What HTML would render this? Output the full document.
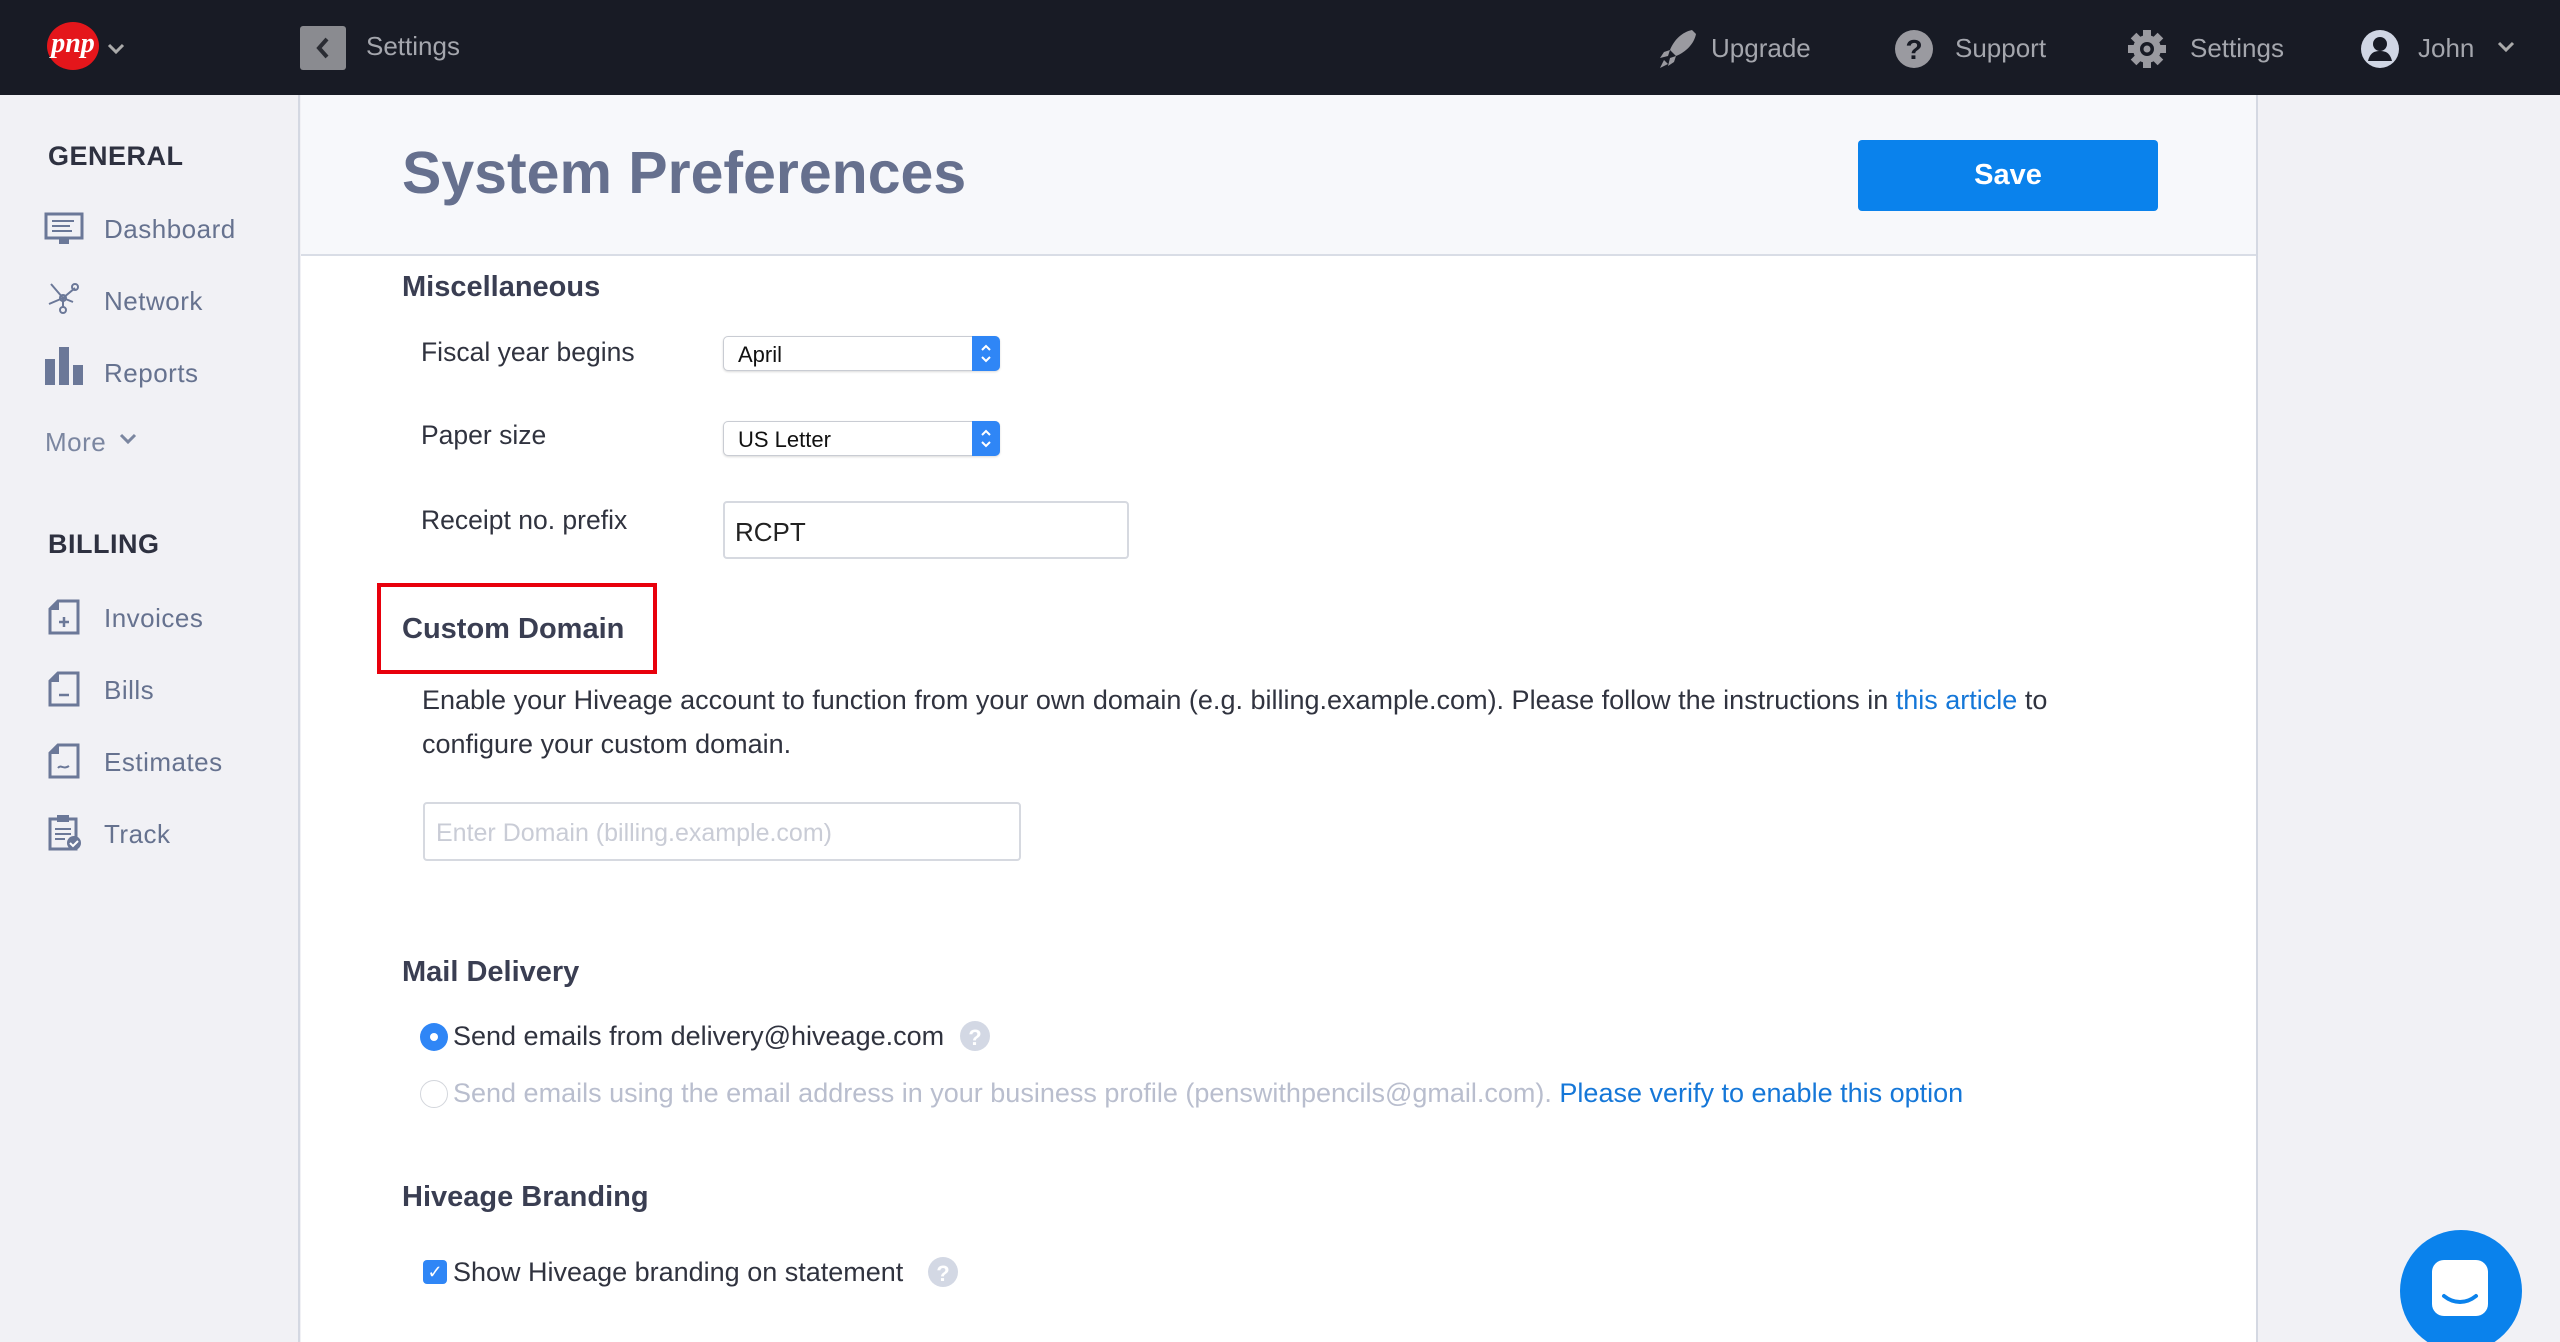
<!DOCTYPE html>
<html><head><meta charset="utf-8"><style>
*{margin:0;padding:0;box-sizing:border-box}
html,body{width:2560px;height:1342px;overflow:hidden}
body{background:#f1f1f5;font-family:"Liberation Sans",sans-serif;position:relative}
.a{position:absolute;white-space:nowrap}
.top{position:absolute;left:0;top:0;width:2560px;height:95px;background:#181b25}
.side{position:absolute;left:0;top:95px;width:300px;height:1247px;background:#f1f1f5;border-right:2px solid #d4d8e2}
.main{position:absolute;left:301px;top:95px;width:1957px;height:1247px;background:#fff;border-right:2px solid #d4d8e2;overflow:hidden}
.hdr{position:absolute;left:0;top:0;width:100%;height:161px;background:#f7f8fb;border-bottom:2px solid #d9dde6}
.nav{font-size:26px;color:#66728f;letter-spacing:.5px}
.sh{font-size:27px;color:#2e3140;font-weight:bold;letter-spacing:.5px}
.h2{font-size:29px;color:#3a3e52;font-weight:bold}
.lbl{font-size:26.5px;color:#30333f}
.tb{font-size:26px;color:#a4a6ad}
.sel{position:absolute;height:35px;border:1px solid #c9ccd3;border-radius:5px;background:#fff;box-shadow:0 1px 2px rgba(0,0,0,.15);font-size:22px;color:#111;padding:5px 0 0 14px}
.sel i{position:absolute;right:-1px;top:-1px;width:28px;height:35px;background:#2f86f6;border-radius:0 5px 5px 0}
</style></head><body>
<div class="top">
  <div class="a" style="left:47px;top:22px;width:52px;height:48px;border-radius:50%;background:#e4161b;color:#fff;font:italic bold 28px 'Liberation Serif',serif;text-align:center;line-height:44px">pnp</div>
  <svg class="a" style="left:106px;top:42px" width="20" height="14"><path d="M3 3l7 7 7-7" stroke="#aaa" stroke-width="3" fill="none"/></svg>
  <div class="a" style="left:300px;top:26px;width:46px;height:44px;background:#8a8b90;border-radius:3px"></div>
  <svg class="a" style="left:312px;top:36px" width="22" height="24"><path d="M15 3l-8 9 8 9" stroke="#2a2c33" stroke-width="4" fill="none"/></svg>
  <div class="a tb" style="left:366px;top:31px">Settings</div>
  <svg class="a" style="left:1656px;top:28px" width="40" height="42"><path d="M36 2c-10 2-18 10-22 20l6 6c10-4 18-12 20-22zM14 22l-6 2-4 6 8-2M20 28l-2 6-6 4 2-8M8 32l-4 8 8-4" fill="#9a9aa0"/></svg>
  <div class="a tb" style="left:1711px;top:33px">Upgrade</div>
  <svg class="a" style="left:1894px;top:29px" width="40" height="40"><circle cx="20" cy="20" r="19" fill="#9a9aa0"/><text x="20" y="30" font-size="28" font-weight="bold" text-anchor="middle" fill="#181b25" font-family="Liberation Sans">?</text></svg>
  <div class="a tb" style="left:1955px;top:33px">Support</div>
  <svg class="a" style="left:2127px;top:29px" width="40" height="40"><g fill="#9a9aa0"><circle cx="20" cy="20" r="14"/><rect x="16" y="1" width="8" height="38"/><rect x="1" y="16" width="38" height="8"/><rect x="16" y="1" width="8" height="38" transform="rotate(45 20 20)"/><rect x="16" y="1" width="8" height="38" transform="rotate(-45 20 20)"/></g><circle cx="20" cy="20" r="7" fill="#181b25"/><circle cx="20" cy="20" r="3.5" fill="#9a9aa0"/></svg>
  <div class="a tb" style="left:2190px;top:33px">Settings</div>
  <svg class="a" style="left:2360px;top:29px" width="40" height="40"><circle cx="20" cy="20" r="19" fill="#d0d6e4"/><circle cx="20" cy="15" r="7" fill="#181b25"/><path d="M8 32c2-8 6-10 12-10s10 2 12 10z" fill="#181b25"/></svg>
  <div class="a tb" style="left:2418px;top:33px">John</div>
  <svg class="a" style="left:2496px;top:40px" width="20" height="14"><path d="M3 3l7 7 7-7" stroke="#aaa" stroke-width="3" fill="none"/></svg>
</div>
<div class="side">
  <div class="a sh" style="left:48px;top:46px">GENERAL</div>
  <svg class="a" style="left:44px;top:117px" width="40" height="34"><rect x="2" y="2" width="36" height="24" fill="none" stroke="#6b7898" stroke-width="3"/><path d="M8 9h22M8 14h18M8 19h20" stroke="#6b7898" stroke-width="2"/><rect x="15" y="27" width="10" height="5" fill="#6b7898"/></svg>
  <div class="a nav" style="left:104px;top:119px">Dashboard</div>
  <svg class="a" style="left:45px;top:183px" width="36" height="36"><g stroke="#6b7898" stroke-width="2" fill="none"><path d="M18 20L6 6M18 20l12-10M18 20l-14 6M18 20l10 4M18 20v10"/><circle cx="18" cy="20" r="3"/><circle cx="30" cy="9" r="3"/><circle cx="18" cy="32" r="3"/></g></svg>
  <div class="a nav" style="left:104px;top:191px">Network</div>
  <svg class="a" style="left:44px;top:250px" width="40" height="40"><rect x="1" y="14" width="10" height="26" fill="#6b7898"/><rect x="15" y="2" width="10" height="38" fill="#6b7898"/><rect x="29" y="20" width="10" height="20" fill="#6b7898"/></svg>
  <div class="a nav" style="left:104px;top:263px">Reports</div>
  <div class="a nav" style="left:45px;top:332px;color:#7b86a0">More</div>
  <svg class="a" style="left:118px;top:337px" width="20" height="14"><path d="M3 3l7 7 7-7" stroke="#7b86a0" stroke-width="3" fill="none"/></svg>
  <div class="a sh" style="left:48px;top:434px">BILLING</div>
  <svg class="a" style="left:48px;top:504px" width="32" height="36"><path d="M10 2h20v32H2V10z" fill="none" stroke="#6b7898" stroke-width="3"/><path d="M10 2v8H2" fill="#6b7898" stroke="#6b7898" stroke-width="2"/><path d="M16 18v10M11 23h10" stroke="#6b7898" stroke-width="2.5"/></svg>
  <div class="a nav" style="left:104px;top:508px">Invoices</div>
  <svg class="a" style="left:48px;top:576px" width="32" height="36"><path d="M10 2h20v32H2V10z" fill="none" stroke="#6b7898" stroke-width="3"/><path d="M10 2v8H2" fill="#6b7898" stroke="#6b7898" stroke-width="2"/><path d="M11 24h10" stroke="#6b7898" stroke-width="2.5"/></svg>
  <div class="a nav" style="left:104px;top:580px">Bills</div>
  <svg class="a" style="left:48px;top:648px" width="32" height="36"><path d="M10 2h20v32H2V10z" fill="none" stroke="#6b7898" stroke-width="3"/><path d="M10 2v8H2" fill="#6b7898" stroke="#6b7898" stroke-width="2"/><path d="M10 25c3-4 5 2 11-2" stroke="#6b7898" stroke-width="2" fill="none"/></svg>
  <div class="a nav" style="left:104px;top:652px">Estimates</div>
  <svg class="a" style="left:48px;top:718px" width="34" height="38"><rect x="2" y="6" width="26" height="30" fill="none" stroke="#6b7898" stroke-width="3"/><rect x="9" y="2" width="12" height="7" fill="#6b7898"/><path d="M7 16h16M7 21h16M7 26h10" stroke="#6b7898" stroke-width="2"/><circle cx="26" cy="30" r="7" fill="#6b7898"/><path d="M22 30l3 3 5-5" stroke="#fff" stroke-width="2" fill="none"/></svg>
  <div class="a nav" style="left:104px;top:724px">Track</div>
</div>
<div class="main">
  <div class="hdr">
    <div class="a" style="left:101px;top:44px;font-size:59px;color:#66708e;font-weight:bold">System Preferences</div>
    <div class="a" style="left:1557px;top:45px;width:300px;height:71px;background:#0a82ec;border-radius:4px;color:#fff;font-size:29px;font-weight:bold;text-align:center;line-height:71px">Save</div>
  </div>
  <div class="a h2" style="left:101px;top:176px">Miscellaneous</div>
  <div class="a lbl" style="left:120px;top:242px">Fiscal year begins</div>
  <div class="sel" style="left:422px;top:241px;width:277px">April<i><svg width="28" height="35"><path d="M10 14l4-4 4 4M10 21l4 4 4-4" stroke="#fff" stroke-width="2" fill="none"/></svg></i></div>
  <div class="a lbl" style="left:120px;top:325px">Paper size</div>
  <div class="sel" style="left:422px;top:326px;width:277px">US Letter<i><svg width="28" height="35"><path d="M10 14l4-4 4 4M10 21l4 4 4-4" stroke="#fff" stroke-width="2" fill="none"/></svg></i></div>
  <div class="a lbl" style="left:120px;top:410px">Receipt no. prefix</div>
  <div class="a" style="left:422px;top:406px;width:406px;height:58px;border:2px solid #d6d9e0;border-radius:4px;font-size:26px;color:#222;padding:14px 0 0 10px">RCPT</div>
  <div class="a" style="left:76px;top:488px;width:280px;height:91px;border:4px solid #e8000c"></div>
  <div class="a h2" style="left:101px;top:518px">Custom Domain</div>
  <div class="a lbl" style="left:121px;top:583px;line-height:44px;font-size:27px;white-space:normal;width:1680px">Enable your Hiveage account to function from your own domain (e.g. billing.example.com). Please follow the instructions in <span style="color:#1577d8">this article</span> to configure your custom domain.</div>
  <div class="a" style="left:122px;top:707px;width:598px;height:59px;border:2px solid #d6d9e0;border-radius:4px;font-size:25px;color:#c9ccd6;padding:15px 0 0 11px">Enter Domain (billing.example.com)</div>
  <div class="a h2" style="left:101px;top:861px">Mail Delivery</div>
  <div class="a" style="left:119px;top:928px;width:28px;height:28px;border-radius:50%;background:#2f86f6"><div style="margin:10px;width:8px;height:8px;border-radius:50%;background:#fff"></div></div>
  <div class="a lbl" style="left:152px;top:926px;font-size:27px">Send emails from delivery@hiveage.com</div>
  <svg class="a" style="left:658px;top:925px" width="32" height="32"><circle cx="16" cy="16" r="15" fill="#d3d8e4"/><text x="16" y="25" font-size="22" font-weight="bold" text-anchor="middle" fill="#fff" font-family="Liberation Sans">?</text></svg>
  <div class="a" style="left:119px;top:985px;width:28px;height:28px;border-radius:50%;border:1.5px solid #d3d6dc;background:#fff"></div>
  <div class="a lbl" style="left:152px;top:983px;color:#b9bece;font-size:27px">Send emails using the email address in your business profile (penswithpencils@gmail.com). <span style="color:#1577d8">Please verify to enable this option</span></div>
  <div class="a h2" style="left:101px;top:1086px">Hiveage Branding</div>
  <div class="a" style="left:122px;top:1165px;width:24px;height:24px;border-radius:4px;background:#2f86f6;color:#fff;font-size:18px;text-align:center;line-height:24px">&#10003;</div>
  <div class="a lbl" style="left:152px;top:1162px;font-size:27px">Show Hiveage branding on statement</div>
  <svg class="a" style="left:626px;top:1161px" width="32" height="32"><circle cx="16" cy="16" r="15" fill="#d3d8e4"/><text x="16" y="25" font-size="22" font-weight="bold" text-anchor="middle" fill="#fff" font-family="Liberation Sans">?</text></svg>
</div>
<div class="a" style="left:2400px;top:1230px;width:122px;height:122px;border-radius:50%;background:#0a82ec"></div>
<svg class="a" style="left:2428px;top:1256px" width="66" height="66"><rect x="4" y="4" width="56" height="56" rx="12" fill="#fff"/><path d="M16 40c10 8 22 8 32 0" stroke="#0a82ec" stroke-width="4" fill="none" stroke-linecap="round"/></svg>
</body></html>
